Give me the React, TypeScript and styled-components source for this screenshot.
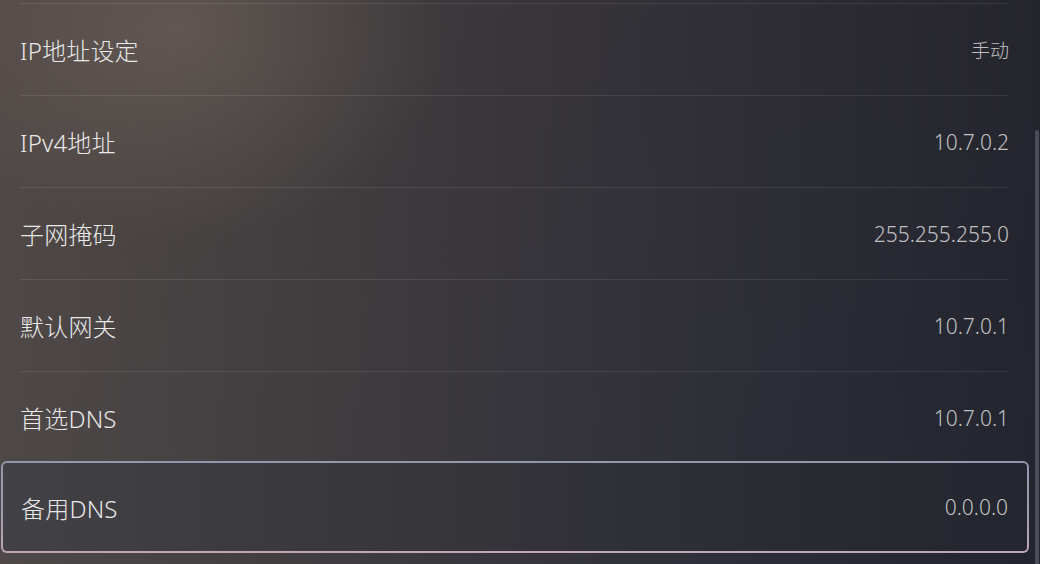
import styled, { createGlobalStyle } from "styled-components";

const GlobalStyle = createGlobalStyle`
    html, body {
        margin: 0;
        padding: 0;
        background: #2a2a30;
    }
    * {
        box-sizing: border-box;
    }
`;

const Screen = styled.div`
    width: 1040px;
    height: 564px;
    overflow: hidden;
    display: flex;
    font-family: "Noto Sans", "Noto Sans CJK SC", sans-serif;
    background:
        radial-gradient(ellipse 360px 280px at 180px 30px, rgba(130, 116, 106, 0.42), transparent 75%),
        linear-gradient(to bottom, rgba(90, 70, 60, 0.12), rgba(70, 72, 80, 0.12)),
        linear-gradient(to right, #4f4847 0%, #423e3f 25%, #34333a 50%, #272933 75%, #1d202b 100%);
`;

const List = styled.div`
    margin-left: 20px;
    width: 989px;
    padding-top: 3px;
    display: flex;
    flex-direction: column;
`;

const Row = styled.div<{ $selected?: boolean }>`
    height: 92px;
    flex-shrink: 0;
    display: flex;
    align-items: center;
    justify-content: space-between;
    border-top: 1px solid rgba(255, 255, 255, 0.09);

    ${({ $selected }) =>
        $selected &&
        `
        margin: -2px -20px 0 -19px;
        padding: 0 19px 0 18px;
        border: 2px solid transparent;
        border-radius: 6px;
        background:
            linear-gradient(to right, #424145 0%, #37363b 40%, #2a2c34 75%, #23262e 100%) padding-box,
            linear-gradient(to bottom, #9297ab 0%, #9e9bad 55%, #c3a5b7 100%) border-box;
    `}
`;

const Label = styled.span`
    font-size: 24px;
    font-weight: 300;
    color: #e8e8e8;
    letter-spacing: 0.2px;
`;

const Value = styled.span<{ $cjk?: boolean }>`
    font-size: ${({ $cjk }) => ($cjk ? "19px" : "21px")};
    font-weight: 300;
    color: #c0c0c2;
`;

const Track = styled.div`
    margin-left: 26px;
    width: 4px;
    padding-top: 130px;
    display: flex;
    flex-direction: column;
`;

const Thumb = styled.div`
    flex: 1;
    background: #4a4e58;
    border-radius: 2px 2px 0 0;
`;

const rows = [
    { label: "IP地址设定", value: "手动", cjk: true },
    { label: "IPv4地址", value: "10.7.0.2" },
    { label: "子网掩码", value: "255.255.255.0" },
    { label: "默认网关", value: "10.7.0.1" },
    { label: "首选DNS", value: "10.7.0.1" },
    { label: "备用DNS", value: "0.0.0.0", selected: true },
];

const App = () => {
    return (
        <>
            <GlobalStyle />
            <Screen>
                <List>
                    {rows.map((r) => (
                        <Row key={r.label} $selected={r.selected}>
                            <Label>{r.label}</Label>
                            <Value $cjk={r.cjk}>{r.value}</Value>
                        </Row>
                    ))}
                </List>
                <Track>
                    <Thumb />
                </Track>
            </Screen>
        </>
    );
};

export default App;
